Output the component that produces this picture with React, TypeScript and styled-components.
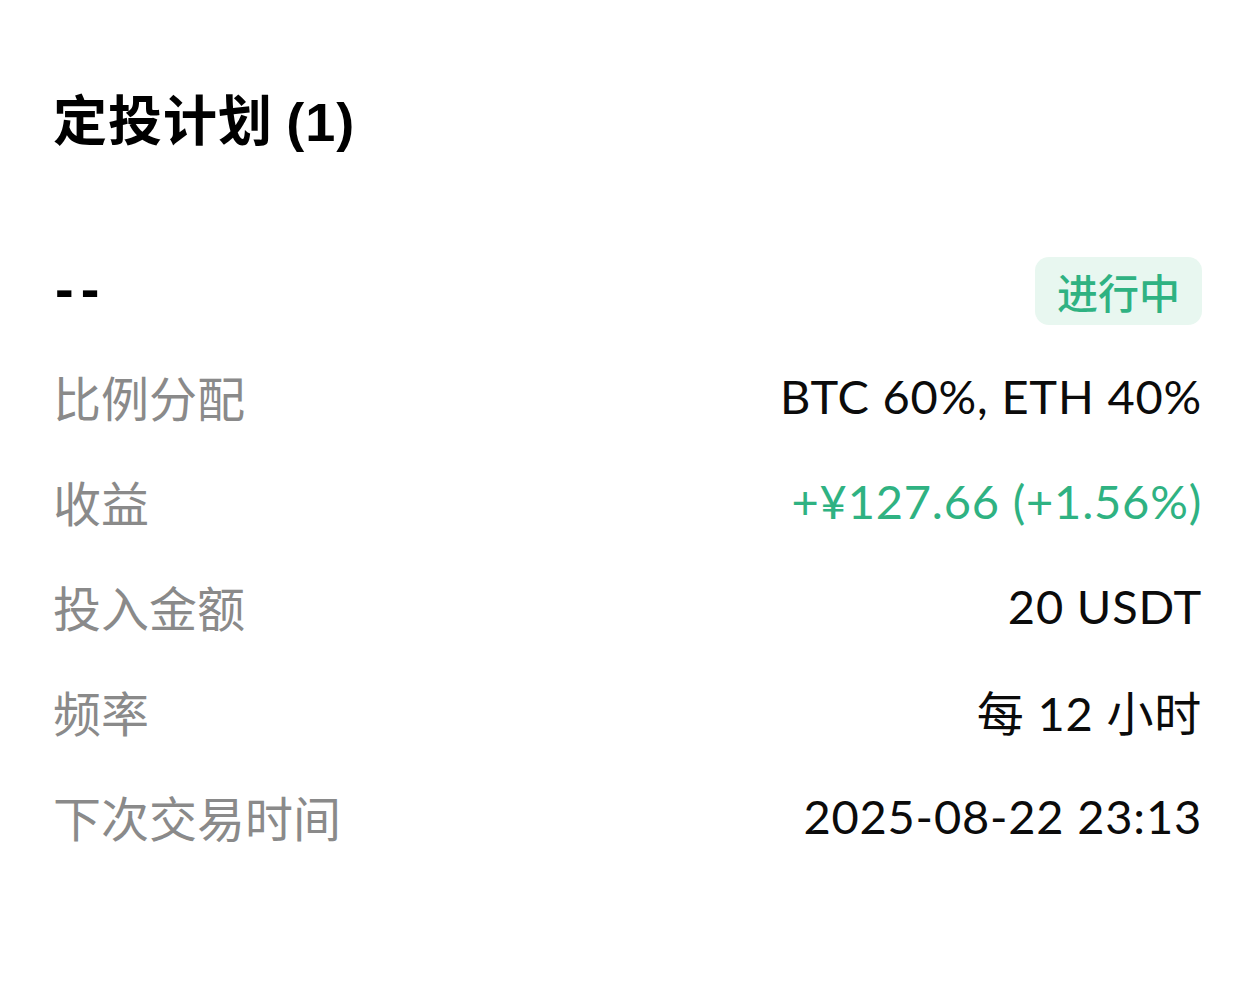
import React from "react";
import styled, { createGlobalStyle } from "styled-components";

const GlobalStyle = createGlobalStyle`
  html, body {
    margin: 0;
    padding: 0;
    background: #ffffff;
  }
  body {
    font-family: "Lato", "Noto Sans CJK SC", sans-serif;
    color: #0b0b0b;
  }
`;

const GREEN = "#2fb282";

const rows: { label: string; value: string; positive?: boolean }[] = [
  { label: "比例分配", value: "BTC 60%, ETH 40%" },
  { label: "收益", value: "+¥127.66 (+1.56%)", positive: true },
  { label: "投入金额", value: "20 USDT" },
  { label: "频率", value: "每 12 小时" },
  { label: "下次交易时间", value: "2025-08-22 23:13" },
];

export default function App() {
  return (
    <>
      <GlobalStyle />
      <Page>
        <Title>
          定投计划 <TitleCount>(1)</TitleCount>
        </Title>
        <PlanHeader>
          <PlanName>--</PlanName>
          <StatusBadge>进行中</StatusBadge>
        </PlanHeader>
        <InfoList>
          {rows.map((r) => (
            <InfoRow key={r.label}>
              <Label>{r.label}</Label>
              <Value $positive={r.positive}>{r.value}</Value>
            </InfoRow>
          ))}
        </InfoList>
      </Page>
    </>
  );
}

const Page = styled.div`
  width: 1255px;
  min-height: 984px;
  box-sizing: border-box;
  padding: 86px 53px 0 53px;
`;

const Title = styled.h1`
  margin: 0;
  height: 64px;
  line-height: 64px;
  font-family: "Noto Sans CJK SC", sans-serif;
  font-size: 54px;
  font-weight: 700;
  color: #000;
  letter-spacing: 1px;
`;

const TitleCount = styled.span`
  font-family: "Liberation Sans", "Noto Sans CJK SC", sans-serif;
  font-weight: 700;
`;

const PlanHeader = styled.div`
  display: flex;
  align-items: center;
  justify-content: space-between;
  margin-top: 107px;
  height: 68px;
`;

const PlanName = styled.div`
  padding: 0 0 6px 2px;
  font-family: "Liberation Sans", sans-serif;
  font-size: 56px;
  font-weight: 700;
  letter-spacing: 7px;
  color: #000;
`;

const StatusBadge = styled.div`
  display: flex;
  align-items: center;
  justify-content: center;
  height: 68px;
  padding: 0 22px;
  border-radius: 14px;
  background: #e8f7f0;
  color: ${GREEN};
  font-family: "Noto Sans CJK SC", sans-serif;
  font-size: 41px;
  font-weight: 500;
`;

const InfoList = styled.div`
  display: flex;
  flex-direction: column;
  margin-top: 18px;
`;

const InfoRow = styled.div`
  display: flex;
  align-items: center;
  justify-content: space-between;
  height: 105px;
`;

const Label = styled.div`
  font-family: "Noto Sans CJK SC", sans-serif;
  font-size: 48px;
  color: #8a8a8a;
`;

const Value = styled.div<{ $positive?: boolean }>`
  font-family: "Lato", "Noto Sans CJK SC", sans-serif;
  font-size: 47px;
  letter-spacing: 0.8px;
  color: ${(p) => (p.$positive ? GREEN : "#0b0b0b")};
`;
